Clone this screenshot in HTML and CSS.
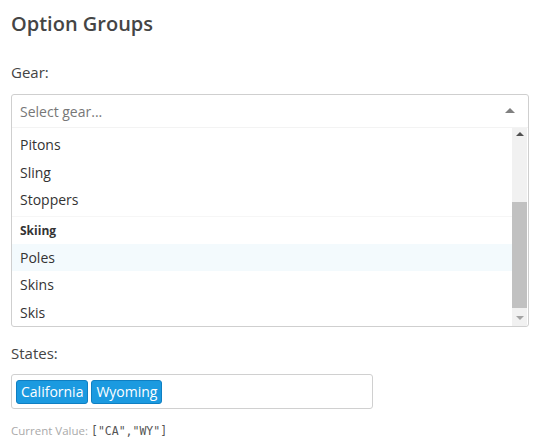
FILE: index.html
```html
<!DOCTYPE html>
<html>
<head>
<meta charset="utf-8">
<link rel="stylesheet" href="styles.css">
</head>
<body>
<div class="page">
  <h2 class="title">Option Groups</h2>

  <label class="label">Gear:</label>
  <div class="select open">
    <div class="select-input">
      <span class="placeholder">Select gear...</span>
      <span class="caret"></span>
    </div>
    <div class="dropdown">
      <div class="options">
        <div class="option">Pitons</div>
        <div class="option">Sling</div>
        <div class="option">Stoppers</div>
        <div class="group">
          <div class="group-header">Skiing</div>
          <div class="option active">Poles</div>
          <div class="option">Skins</div>
          <div class="option">Skis</div>
        </div>
      </div>
      <div class="scrollbar">
        <span class="sb-arrow up"></span>
        <div class="sb-track"><div class="sb-thumb"></div></div>
        <span class="sb-arrow down"></span>
      </div>
    </div>
  </div>

  <label class="label states-label">States:</label>
  <div class="tags">
    <span class="tag">California</span>
    <span class="tag">Wyoming</span>
  </div>
  <div class="value">Current Value: <code>["CA","WY"]</code></div>
</div>
</body>
</html>
```
FILE: styles.css
```css
html, body {
  margin: 0;
  padding: 0;
  background: #fff;
}

.page {
  padding: 7px 11px 0 11px;
  font-family: "Open Sans", "Liberation Sans", sans-serif;
  color: #333;
  width: 518px;
}

.title {
  margin: 0;
  font-size: 20px;
  font-weight: 600;
  line-height: 34px;
  color: #454545;
}

.label {
  display: block;
  margin-top: 20px;
  font-size: 15px;
  line-height: 22px;
  color: #444;
}

.select {
  margin-top: 11px;
  border: 1px solid #cfcfcf;
  border-radius: 3px;
  background: #fff;
  overflow: hidden;
}

.select-input {
  height: 33px;
  display: flex;
  align-items: center;
  justify-content: space-between;
  padding: 0 13px 0 8px;
  border-bottom: 1px solid #f3f3f3;
  box-sizing: border-box;
}

.placeholder {
  font-size: 14px;
  color: #777;
}

.caret {
  width: 0;
  height: 0;
  border-left: 5px solid transparent;
  border-right: 5px solid transparent;
  border-bottom: 5px solid #808080;
  margin-top: -2px;
}

.dropdown {
  display: flex;
  height: 198px;
}

.options {
  flex: 1;
  padding-top: 3px;
}

.option {
  height: 27.5px;
  line-height: 27.5px;
  padding-left: 8px;
  font-size: 14px;
  color: #333;
}

.option.active {
  background: #f3fafd;
}

.group {
  border-top: 1px solid #f6f6f6;
  margin-top: 2px;
}

.group-header {
  height: 27px;
  line-height: 27px;
  padding-left: 8px;
  font-size: 12px;
  font-weight: 700;
  color: #333;
}

.scrollbar {
  width: 15px;
  margin-right: 1px;
  background: #f1f1f1;
  display: flex;
  flex-direction: column;
  align-items: center;
}

.sb-arrow {
  width: 0;
  height: 0;
  border-left: 4px solid transparent;
  border-right: 4px solid transparent;
}

.sb-arrow.up {
  border-bottom: 4px solid #505050;
  margin: 4px 0 5px;
}

.sb-arrow.down {
  border-top: 4px solid #a3a3a3;
  margin: 6px 0 6px;
}

.sb-track {
  flex: 1;
  width: 100%;
  display: flex;
  flex-direction: column;
  justify-content: flex-end;
  padding-bottom: 2px;
  box-sizing: border-box;
}

.sb-thumb {
  height: 106px;
  background: #c1c1c1;
}

.states-label {
  margin-top: 15px;
}

.tags {
  margin-top: 10px;
  width: 362px;
  height: 35px;
  box-sizing: border-box;
  border: 1px solid #d0d0d0;
  border-radius: 3px;
  display: flex;
  align-items: center;
  gap: 3px;
  padding: 0 4px;
}

.tag {
  background: #1b9ae0;
  border: 1px solid #0f7fc2;
  border-radius: 3px;
  color: #fff;
  font-size: 14px;
  line-height: 22px;
  padding: 0 4px;
}

.value {
  margin-top: 14px;
  font-size: 11.5px;
  color: #aaa;
}

.value code {
  font-family: "DejaVu Sans Mono", "Liberation Mono", monospace;
  font-size: 11.5px;
  color: #555;
}
```
